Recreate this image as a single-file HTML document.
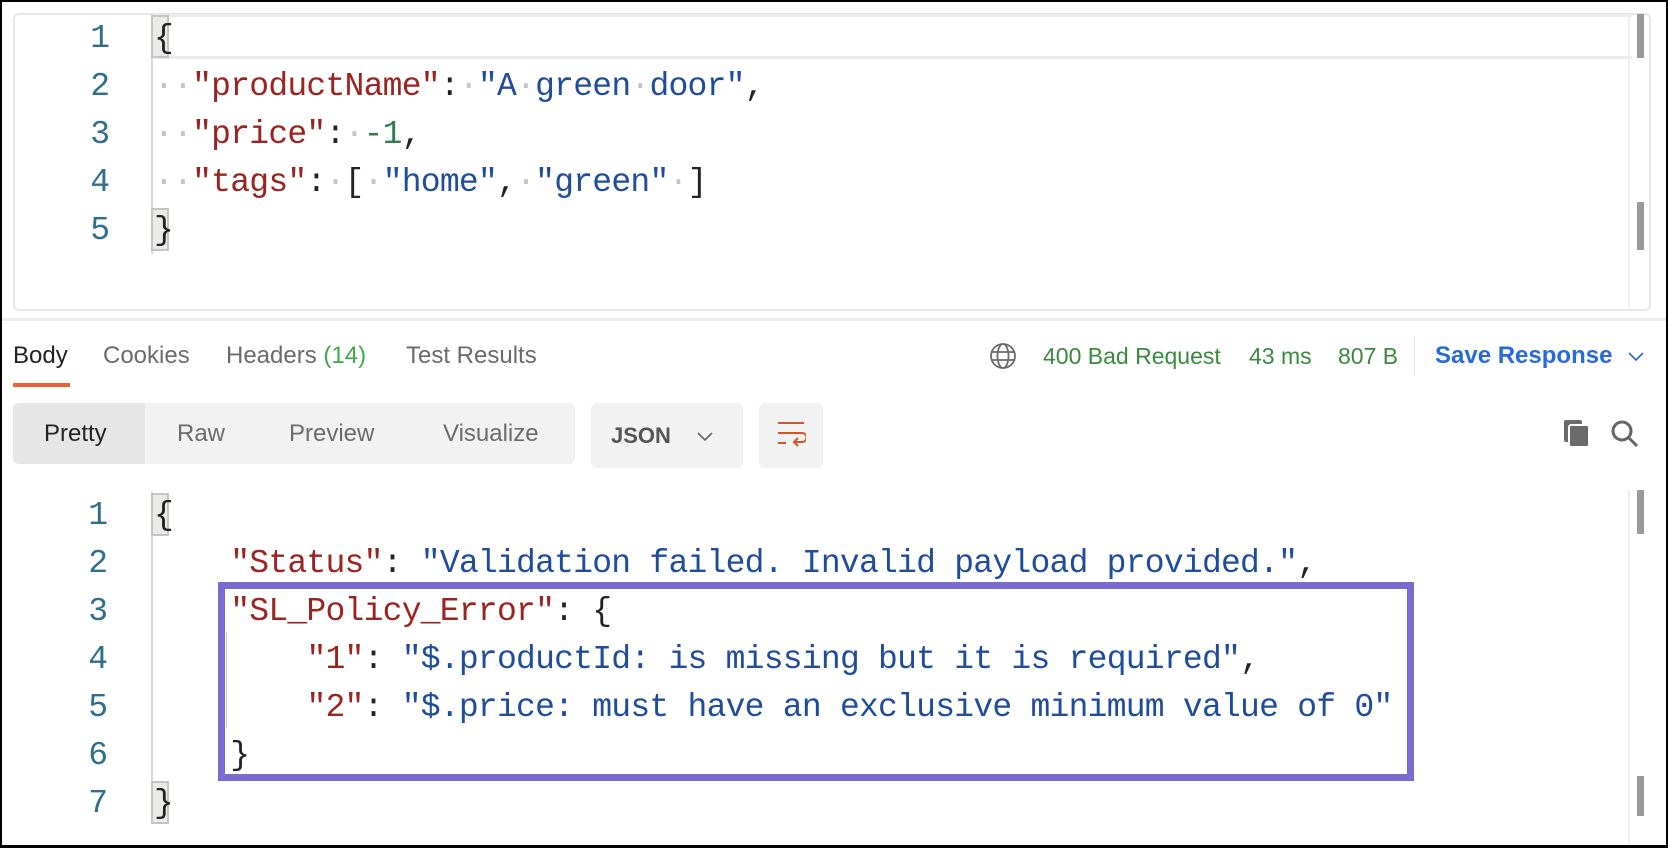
<!DOCTYPE html>
<html><head><meta charset="utf-8"><style>
*{margin:0;padding:0;box-sizing:border-box}
body{width:1668px;height:848px;background:#fff;position:relative;overflow:hidden;font-family:"Liberation Sans",sans-serif}
.frame{position:absolute;left:0;top:0;width:1668px;height:848px;border:2px solid #000;border-bottom-width:3px;z-index:10;pointer-events:none}
.abs{position:absolute;white-space:pre}
.code{font-family:"Liberation Mono",monospace;font-size:33px;letter-spacing:-0.75px;line-height:48px}
.ln{color:#2F6E8C;text-align:right;width:60px;letter-spacing:0}
.k{color:#9B2320}.s{color:#1F4D9B}.n{color:#2E7D4F}.p{color:#222}.d{color:#c4c4c4}
.bb{position:absolute;width:18px;height:43px;background:#e9ece6;border:2px solid #c4c4c4}
.ui{font-size:24px;color:#6b6b6b}
</style></head><body>
<div class="frame"></div>

<!-- top editor -->
<div class="abs" style="left:13px;top:13px;width:1638px;height:298px;border:2px solid #e6e6e6;border-radius:6px"></div>
<div class="abs" style="left:152px;top:14px;width:1480px;height:45px;border-top:3px solid #ececec;border-bottom:3px solid #ececec"></div>
<div class="abs" style="left:151px;top:14px;width:2px;height:240px;background:#d8d8d8"></div>
<div class="bb" style="left:151px;top:15px"></div>
<div class="bb" style="left:151px;top:208px"></div>
<div class="abs" style="left:1628px;top:14px;width:2px;height:294px;background:#eee"></div>
<div class="abs" style="left:1637px;top:14px;width:7px;height:44px;background:#9a9a9a"></div>
<div class="abs" style="left:1637px;top:202px;width:7px;height:48px;background:#9a9a9a"></div>
<div class="abs code ln" style="left:50px;top:15px">1
2
3
4
5</div>
<div class="abs code" style="left:154px;top:15px"><span class="p">{</span>
<span class="d">··</span><span class="k">"productName"</span><span class="p">:</span><span class="d">·</span><span class="s">"A<span class="d">·</span>green<span class="d">·</span>door"</span><span class="p">,</span>
<span class="d">··</span><span class="k">"price"</span><span class="p">:</span><span class="d">·</span><span class="n">-1</span><span class="p">,</span>
<span class="d">··</span><span class="k">"tags"</span><span class="p">:</span><span class="d">·</span><span class="p">[</span><span class="d">·</span><span class="s">"home"</span><span class="p">,</span><span class="d">·</span><span class="s">"green"</span><span class="d">·</span><span class="p">]</span>
<span class="p">}</span></div>

<div class="abs" style="left:0;top:318px;width:1668px;height:3px;background:#ececec"></div>

<!-- tabs -->
<div class="abs ui" style="left:13px;top:342px;color:#222">Body</div>
<div class="abs" style="left:13px;top:383px;width:57px;height:4px;background:#E5653A"></div>
<div class="abs ui" style="left:103px;top:342px">Cookies</div>
<div class="abs ui" style="left:226px;top:342px">Headers <span style="color:#3FA84B">(14)</span></div>
<div class="abs ui" style="left:406px;top:342px">Test Results</div>

<svg class="abs" style="left:989px;top:342px" width="28" height="28" viewBox="0 0 28 28" fill="none" stroke="#6b6b6b" stroke-width="1.8"><circle cx="14" cy="14" r="12"/><ellipse cx="14" cy="14" rx="5.5" ry="12"/><path d="M3 10h22M3 18h22"/></svg>
<div class="abs ui" style="left:1043px;top:343px;color:#3A8A3E;font-size:23px">400 Bad Request</div>
<div class="abs ui" style="left:1249px;top:343px;color:#3A8A3E;font-size:23px">43 ms</div>
<div class="abs ui" style="left:1338px;top:343px;color:#3A8A3E;font-size:23px">807 B</div>
<div class="abs" style="left:1414px;top:336px;width:1px;height:40px;background:#e2e2e2"></div>
<div class="abs ui" style="left:1435px;top:342px;color:#2A6AD6;font-weight:bold">Save Response</div>
<svg class="abs" style="left:1627px;top:349px" width="18" height="14" viewBox="0 0 18 14" fill="none" stroke="#2A6AD6" stroke-width="1.6"><path d="M2 4l7 7 7-7"/></svg>

<!-- toolbar -->
<div class="abs" style="left:13px;top:403px;width:562px;height:61px;background:#f2f2f2;border-radius:6px"></div>
<div class="abs" style="left:13px;top:403px;width:132px;height:61px;background:#e6e6e6;border-radius:6px 0 0 6px"></div>
<div class="abs ui" style="left:44px;top:420px;color:#222">Pretty</div>
<div class="abs ui" style="left:177px;top:420px">Raw</div>
<div class="abs ui" style="left:289px;top:420px">Preview</div>
<div class="abs ui" style="left:443px;top:420px">Visualize</div>
<div class="abs" style="left:591px;top:403px;width:152px;height:65px;background:#f2f2f2;border-radius:6px"></div>
<div class="abs ui" style="left:611px;top:423px;color:#555;font-weight:bold;font-size:22px">JSON</div>
<svg class="abs" style="left:696px;top:429px" width="18" height="14" viewBox="0 0 18 14" fill="none" stroke="#666" stroke-width="1.6"><path d="M2 4l7 7 7-7"/></svg>
<div class="abs" style="left:759px;top:403px;width:64px;height:65px;background:#f2f2f2;border-radius:6px"></div>
<svg class="abs" style="left:776px;top:420px" width="30" height="32" viewBox="0 0 30 32" fill="none" stroke="#D2542B" stroke-width="2"><path d="M2 3h26M2 13h24a4 4 0 0 1 0 9h-8M22 18l-4 4 4 4M2 23h8"/></svg>
<svg class="abs" style="left:1562px;top:418px" width="30" height="30" viewBox="0 0 30 30"><rect x="2" y="2" width="18" height="22" rx="2" fill="#6b6b6b"/><rect x="7" y="7" width="20" height="22" rx="2" fill="#6b6b6b" stroke="#fff" stroke-width="2"/></svg>
<svg class="abs" style="left:1609px;top:418px" width="32" height="32" viewBox="0 0 32 32" fill="none" stroke="#666" stroke-width="3"><circle cx="13" cy="13" r="9"/><path d="M20 20l8 8"/></svg>

<!-- response editor -->
<div class="abs" style="left:151px;top:492px;width:2px;height:332px;background:#d8d8d8"></div>
<div class="bb" style="left:151px;top:493px"></div>
<div class="bb" style="left:151px;top:781px"></div>
<div class="abs" style="left:1628px;top:490px;width:2px;height:358px;background:#eee"></div>
<div class="abs" style="left:1637px;top:490px;width:7px;height:44px;background:#9a9a9a"></div>
<div class="abs" style="left:1637px;top:776px;width:7px;height:40px;background:#9a9a9a"></div>
<div class="abs" style="left:226px;top:632px;width:1px;height:96px;background:#ccc"></div>
<div class="abs code ln" style="left:48px;top:492px">1
2
3
4
5
6
7</div>
<div class="abs code" style="left:154px;top:492px"><span class="p">{</span>
    <span class="k">"Status"</span><span class="p">: </span><span class="s">"Validation failed. Invalid payload provided."</span><span class="p">,</span>
    <span class="k">"SL_Policy_Error"</span><span class="p">: {</span>
        <span class="k">"1"</span><span class="p">: </span><span class="s">"$.productId: is missing but it is required"</span><span class="p">,</span>
        <span class="k">"2"</span><span class="p">: </span><span class="s">"$.price: must have an exclusive minimum value of 0"</span>
    <span class="p">}</span>
<span class="p">}</span></div>
<div class="abs" style="left:218px;top:582px;width:1196px;height:199px;border:7px solid #7B6AD2"></div>
</body></html>
